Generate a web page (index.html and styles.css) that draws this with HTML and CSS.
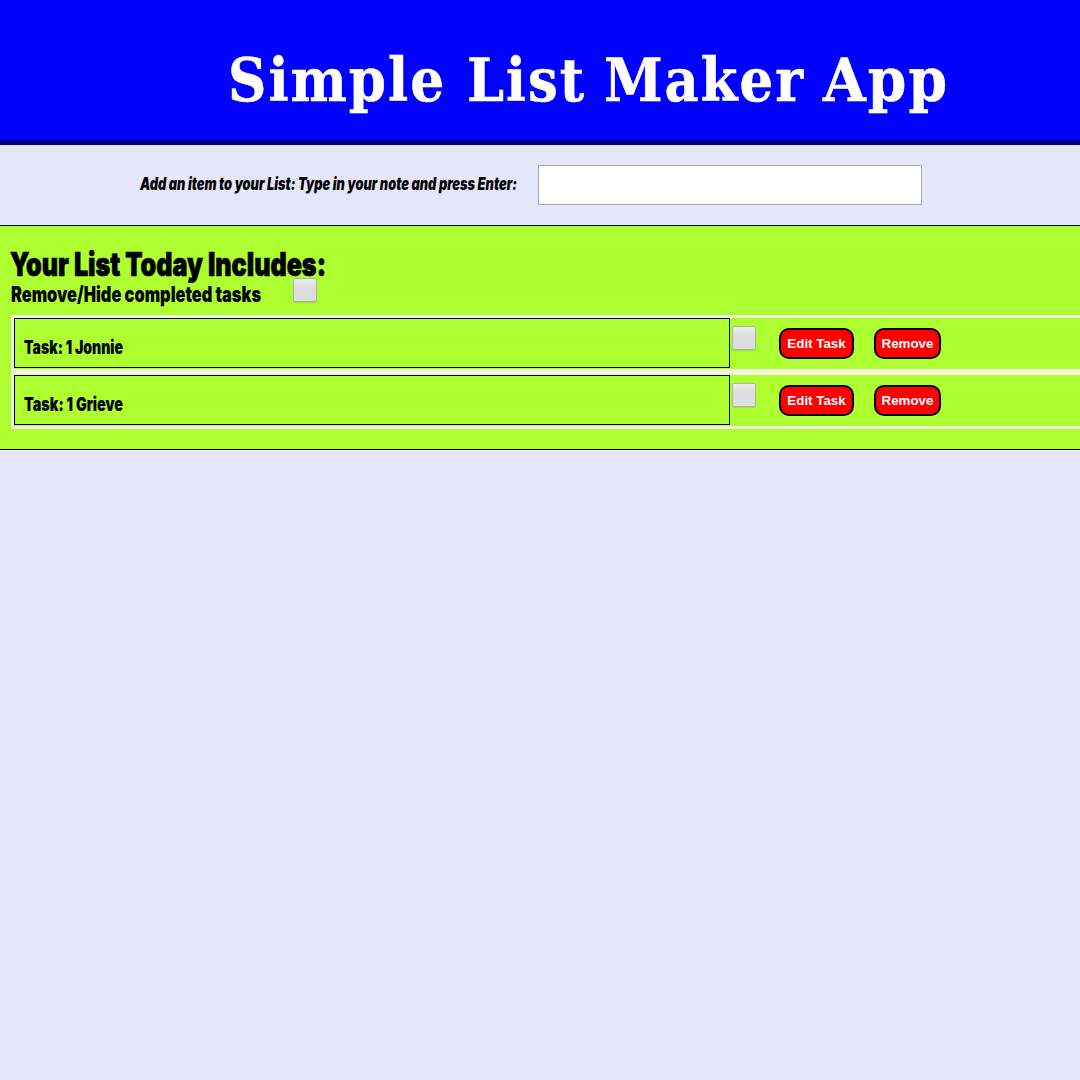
FILE: index.html
```html
<!DOCTYPE html>
<html lang="en">
<head>
<meta charset="utf-8">
<title>Simple List Maker App</title>
<link rel="stylesheet" href="styles.css">
</head>
<body>
<header class="banner">
  <svg class="banner-title" width="1080" height="140" role="heading" aria-level="1">
    <text y="101"><tspan x="228" textLength="218" lengthAdjust="spacingAndGlyphs">Simple</tspan> <tspan x="467" textLength="119" lengthAdjust="spacingAndGlyphs">List</tspan> <tspan x="604" textLength="201" lengthAdjust="spacingAndGlyphs">Maker</tspan> <tspan x="823" textLength="126" lengthAdjust="spacingAndGlyphs">App</tspan></text>
  </svg>
</header>
<form class="add-form">
  <label class="add-label" for="note">
    <svg width="382" height="30"><text class="label-text" x="1" y="20" textLength="377" lengthAdjust="spacingAndGlyphs">Add an item to your List: Type in your note and press Enter:</text></svg>
  </label>
  <input class="add-input" id="note" type="text">
</form>
<main class="list">
  <svg class="list-title" width="330" height="34"><text class="heading-text" x="-1" y="30" textLength="316" lengthAdjust="spacingAndGlyphs">Your List Today Includes:</text></svg>
  <div class="hide-row">
    <svg width="282" height="30"><text class="sub-text" x="0" y="22" textLength="250" lengthAdjust="spacingAndGlyphs">Remove/Hide completed tasks</text></svg>
    <span class="check hide-check"></span>
  </div>
  <div class="task">
    <div class="task-name"><svg width="140" height="48"><text class="task-text" x="-1" y="35" textLength="99" lengthAdjust="spacingAndGlyphs">Task: 1 Jonnie</text></svg></div>
    <span class="check"></span>
    <button class="btn edit" type="button">Edit Task</button>
    <button class="btn remove" type="button">Remove</button>
  </div>
  <div class="task">
    <div class="task-name"><svg width="140" height="48"><text class="task-text" x="-1" y="35" textLength="99" lengthAdjust="spacingAndGlyphs">Task: 1 Grieve</text></svg></div>
    <span class="check"></span>
    <button class="btn edit" type="button">Edit Task</button>
    <button class="btn remove" type="button">Remove</button>
  </div>
</main>
</body>
</html>
```
FILE: styles.css
```css
* { box-sizing: border-box; }
body {
  margin: 0;
  background: #e6e6fa;
  overflow-x: hidden;
  font-family: "Liberation Sans", Arial, sans-serif;
}
svg { display: block; overflow: visible; flex: none; }
.banner {
  height: 145px;
  background: #0000ff;
  border-bottom: 5px solid #000080;
}
.banner-title {
  font: bold 60px "DejaVu Serif Condensed", "DejaVu Serif", serif;
  letter-spacing: 2px;
  fill: #fff;
  stroke: #fff;
  stroke-width: 0.5px;
}
.add-form {
  display: flex;
  height: 80px;
  padding: 20px 0 0 139px;
}
.add-label { width: 399px; padding-top: 5px; }
.add-input {
  width: 384px;
  height: 40px;
  border: 1px solid #a9a9a9;
  background: #fff;
}
.label-text, .heading-text, .sub-text, .task-text {
  font-family: Impact, Inter, sans-serif;
  font-weight: 900;
  fill: #000;
}
.label-text { font-size: 17px; font-style: italic; }
.heading-text { font-size: 32.5px; stroke: #000; stroke-width: 0.7px; }
.sub-text { font-size: 21.5px; }
.task-text { font-size: 19px; }
.list {
  height: 225px;
  padding: 20px 0 0 11px;
  background: #adff2f;
  border: solid #000;
  border-width: 1px 0;
}
.hide-row { display: flex; height: 35px; }
.check {
  flex: none;
  width: 24px;
  height: 24px;
  border: 1px solid #b0b0b0;
  border-radius: 2px;
  background: linear-gradient(#ededed, #dcdcdc 40%, #dedede);
  box-shadow: 0 1px 1px rgba(0, 0, 0, 0.1);
}
.hide-check { margin-top: -2px; }
.task {
  display: flex;
  align-items: flex-start;
  width: 1080px;
  height: 57px;
  border: 3px solid #f5f5dc;
}
.task-name {
  flex: none;
  width: 716px;
  height: 50px;
  padding-left: 10px;
  border: 1px solid #000;
}
.task .check { margin: 8px 0 0 2px; }
.btn {
  flex: none;
  height: 31px;
  margin: 10px 0 0;
  padding: 0;
  border: 2px solid #000;
  border-radius: 10px;
  background: #f00;
  color: #fff;
  font: bold 13.333px "Liberation Sans", Arial, sans-serif;
}
.edit { width: 75px; margin-left: 23px; }
.remove { width: 67px; margin-left: 20px; }
```
